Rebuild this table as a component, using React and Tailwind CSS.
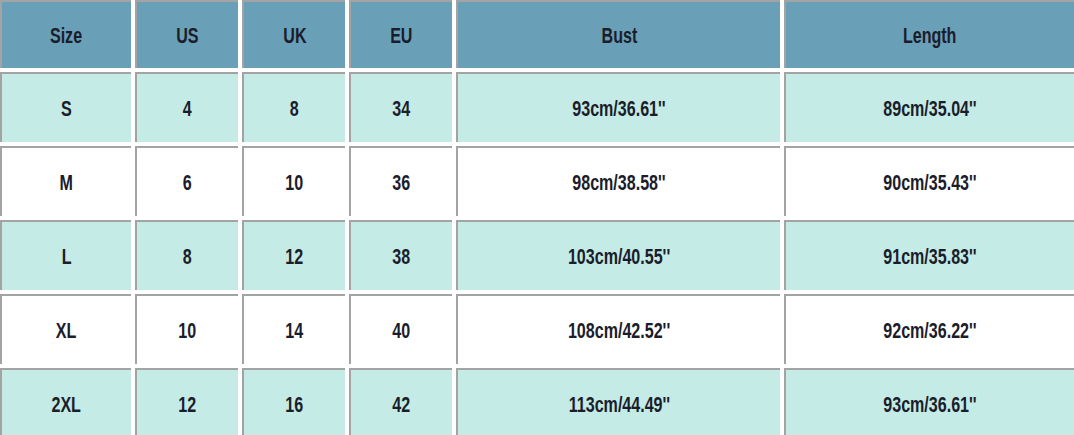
const headers = ['Size', 'US', 'UK', 'EU', 'Bust', 'Length']

const rows = [
  ['S', '4', '8', '34', '93cm/36.61\'\'', '89cm/35.04\'\''],
  ['M', '6', '10', '36', '98cm/38.58\'\'', '90cm/35.43\'\''],
  ['L', '8', '12', '38', '103cm/40.55\'\'', '91cm/35.83\'\''],
  ['XL', '10', '14', '40', '108cm/42.52\'\'', '92cm/36.22\'\''],
  ['2XL', '12', '16', '42', '113cm/44.49\'\'', '93cm/36.61\'\''],
]

function Cell({ children, className }) {
  return (
    <div className={`flex items-center justify-center border-t-2 border-l-2 border-[#a3a3a3] ${className}`}>
      <span className="inline-block scale-x-[0.73] text-[22px] font-bold text-[#1b1d2b] whitespace-nowrap">
        {children}
      </span>
    </div>
  )
}

export default function App() {
  return (
    <div className="w-[1074px] h-[435px] overflow-hidden bg-white" style={{ fontFamily: '"Liberation Sans", Arial, sans-serif' }}>
      <div className="grid grid-cols-[131px_103px_103px_103px_324px_1fr] gap-[4px]">
        {headers.map((h, j) => (
          <Cell key={h} className={`h-[68px] bg-[#69a0b7] border-t-0 ${j === 0 ? 'border-l-0' : ''}`}>{h}</Cell>
        ))}
        {rows.map((row, i) =>
          row.map((v, j) => (
            <Cell
              key={`${i}-${j}`}
              className={`h-[70px] ${i % 2 === 0 ? 'bg-[#c4ebe5]' : 'bg-white'} ${j === 0 ? 'border-l-0' : ''}`}
            >
              {v}
            </Cell>
          ))
        )}
      </div>
    </div>
  )
}
